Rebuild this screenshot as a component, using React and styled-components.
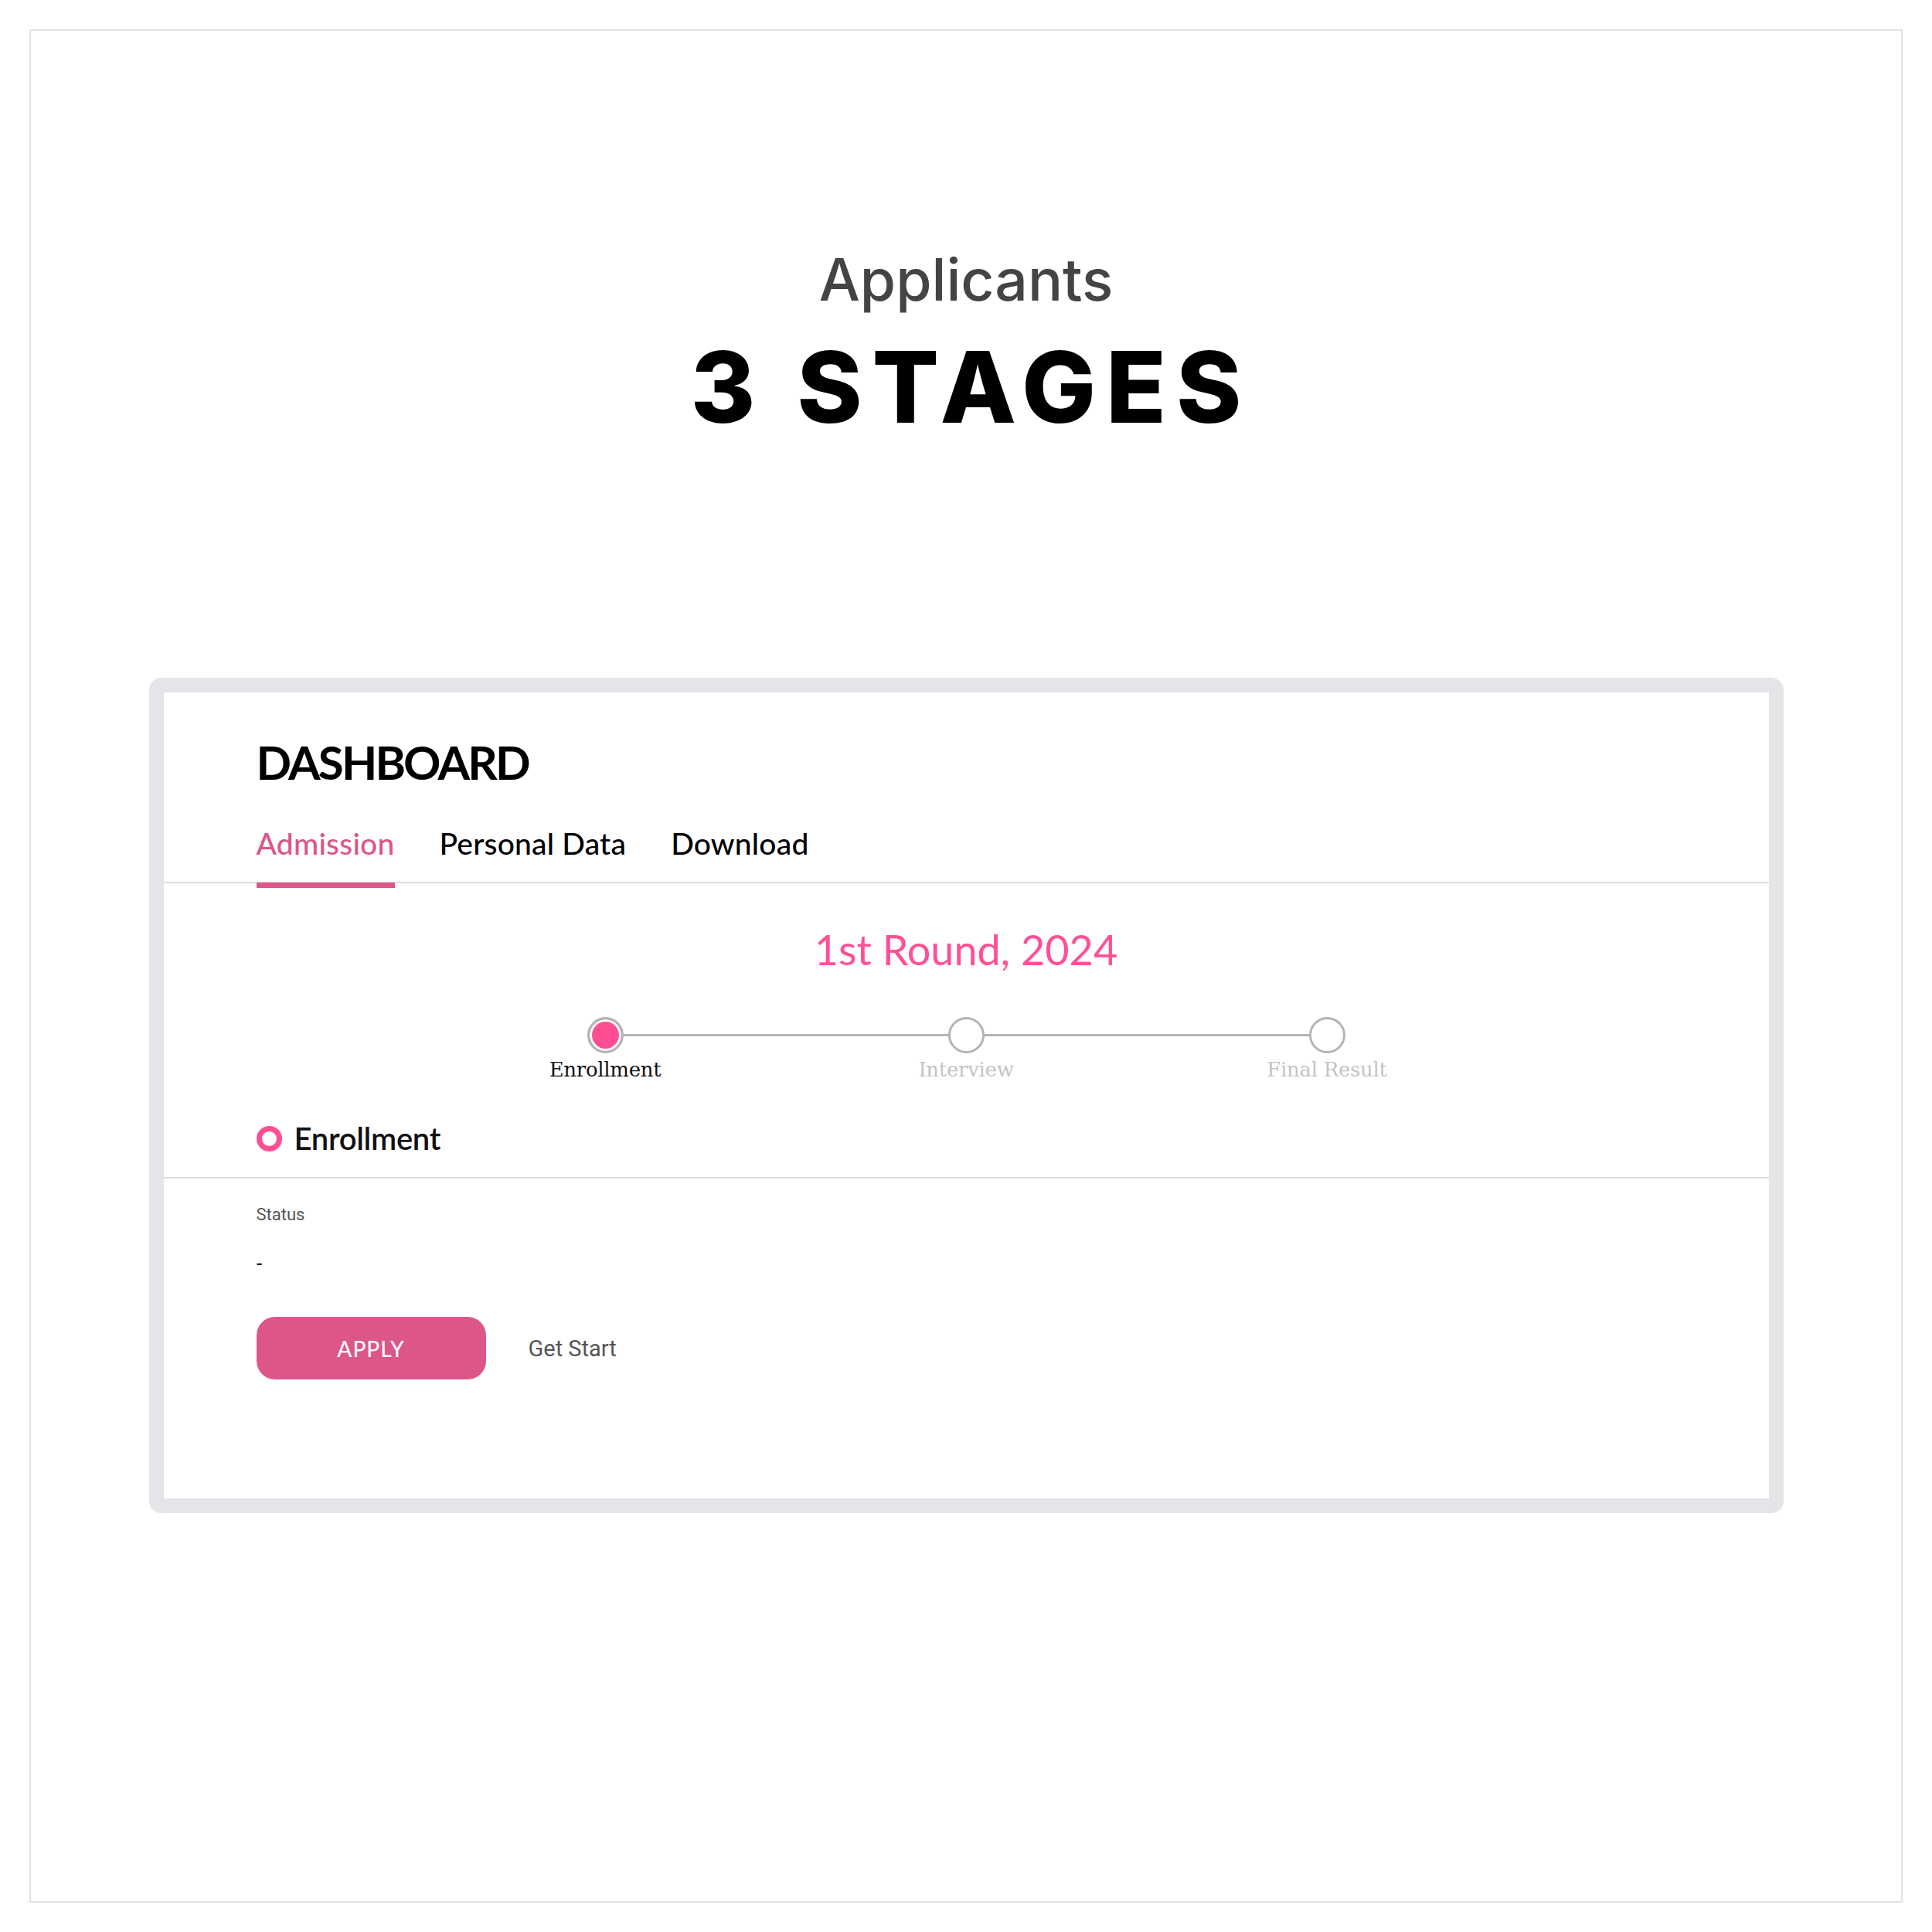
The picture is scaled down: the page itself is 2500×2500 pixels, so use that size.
import styled, { createGlobalStyle, css } from 'styled-components';

const GlobalStyle = createGlobalStyle`
  html, body {
    margin: 0;
    padding: 0;
    background: #fff;
  }
  * {
    box-sizing: border-box;
  }
`;

const steps = [
  { label: 'Enrollment', active: true },
  { label: 'Interview', active: false },
  { label: 'Final Result', active: false },
];

const tabs = ['Admission', 'Personal Data', 'Download'];

function App() {
  return (
    <Page>
      <GlobalStyle />
      <Frame>
        <Kicker>Applicants</Kicker>
        <Headline>3 STAGES</Headline>

        <Card>
          <Title>DASHBOARD</Title>
          <TabBar>
            {tabs.map((t, i) => (
              <Tab key={t} $active={i === 0}>{t}</Tab>
            ))}
          </TabBar>

          <RoundTitle>1st Round, 2024</RoundTitle>

          <Stepper>
            {steps.map((s) => (
              <Step key={s.label}>
                <Dot $active={s.active} />
                <StepLabel $active={s.active}>{s.label}</StepLabel>
              </Step>
            ))}
          </Stepper>

          <SectionHead>
            <Ring />
            <SectionName>Enrollment</SectionName>
          </SectionHead>

          <Body>
            <FieldLabel>Status</FieldLabel>
            <FieldValue>-</FieldValue>
            <Actions>
              <ApplyButton>APPLY</ApplyButton>
              <Hint>Get Start</Hint>
            </Actions>
          </Body>
        </Card>
      </Frame>
    </Page>
  );
}

const Page = styled.div`
  width: 2500px;
  height: 2500px;
  padding: 38px;
  background: #fff;
`;

const Frame = styled.div`
  height: 100%;
  border: 2px solid #e2e2e2;
  display: flex;
  flex-direction: column;
  align-items: center;
  padding-top: 284px;
`;

const Kicker = styled.div`
  font-family: Inter, "Noto Sans", sans-serif;
  font-size: 75px;
  font-weight: 500;
  line-height: 1;
  color: #444;
`;

const Headline = styled.div`
  margin-top: 38px;
  font-family: Inter, "Noto Sans", sans-serif;
  font-size: 128px;
  font-weight: 800;
  line-height: 1;
  letter-spacing: 0.1em;
  padding-left: 0.1em;
  color: #000;
`;

const Card = styled.div`
  margin-top: 312px;
  width: 2115px;
  border: 19px solid #e4e4e9;
  border-radius: 16px;
  background: #fff;
`;

const Title = styled.div`
  margin: 60px 120px 0;
  font-family: Lato, sans-serif;
  font-size: 60px;
  font-weight: 700;
  line-height: 1;
  letter-spacing: -2.8px;
  color: #000;
`;

const TabBar = styled.div`
  margin-top: 56px;
  padding: 0 120px;
  display: flex;
  gap: 58px;
  border-bottom: 2px solid #dcdcdc;
`;

const Tab = styled.div`
  position: relative;
  padding-bottom: 30px;
  font-family: Lato, sans-serif;
  font-size: 39px;
  font-weight: 500;
  line-height: 1;
  letter-spacing: 0.2px;
  color: ${(p) => (p.$active ? '#dc5689' : '#000')};
  ${(p) =>
    p.$active &&
    css`
      &::after {
        content: '';
        position: absolute;
        left: 0;
        right: 0;
        bottom: -8px;
        height: 7px;
        background: #dc5689;
      }
    `}
`;

const RoundTitle = styled.div`
  margin-top: 59px;
  text-align: center;
  font-family: Lato, sans-serif;
  font-size: 54px;
  font-weight: 400;
  line-height: 1;
  color: #ff4f97;
`;

const Stepper = styled.div`
  margin-top: 60px;
  display: grid;
  grid-template-columns: repeat(3, 467px);
  justify-content: center;
`;

const Step = styled.div`
  position: relative;
  display: flex;
  flex-direction: column;
  align-items: center;

  & + &::before {
    content: '';
    position: absolute;
    top: 22px;
    right: 50%;
    width: 100%;
    height: 3px;
    background: #b4b4b4;
  }
`;

const Dot = styled.div`
  position: relative;
  z-index: 1;
  width: 47px;
  height: 47px;
  border-radius: 50%;
  border: 3px solid #b4b4b4;
  background: ${(p) => (p.$active ? '#ff4d94' : '#fff')};
  box-shadow: ${(p) => (p.$active ? 'inset 0 0 0 3px #fff' : 'none')};
`;

const StepLabel = styled.div`
  margin-top: 8px;
  font-family: "DejaVu Serif", serif;
  font-size: 26px;
  line-height: 1;
  letter-spacing: -0.3px;
  color: ${(p) => (p.$active ? '#111' : '#c4c4c4')};
`;

const SectionHead = styled.div`
  margin-top: 56px;
  padding: 0 120px 30px;
  display: flex;
  align-items: center;
  gap: 16px;
  border-bottom: 2px solid #dcdcdc;
`;

const Ring = styled.span`
  width: 33px;
  height: 33px;
  border-radius: 50%;
  border: 7px solid #ff4d94;
`;

const SectionName = styled.div`
  font-family: Lato, sans-serif;
  font-size: 40px;
  font-weight: 600;
  line-height: 1;
  letter-spacing: -0.3px;
  color: #111;
`;

const Body = styled.div`
  padding: 36px 120px 154px;
`;

const FieldLabel = styled.div`
  font-family: Roboto, sans-serif;
  font-size: 22px;
  line-height: 1;
  color: #555;
`;

const FieldValue = styled.div`
  margin-top: 40px;
  font-family: Roboto, sans-serif;
  font-size: 24px;
  font-weight: 500;
  line-height: 1;
  color: #222;
`;

const Actions = styled.div`
  margin-top: 57px;
  display: flex;
  align-items: center;
  gap: 55px;
`;

const ApplyButton = styled.button`
  width: 297px;
  height: 81px;
  border: none;
  border-radius: 24px;
  background: #dc5689;
  color: #fff;
  font-family: Lato, sans-serif;
  font-size: 28px;
  font-weight: 500;
  letter-spacing: 1px;
`;

const Hint = styled.span`
  font-family: Roboto, sans-serif;
  font-size: 29px;
  color: #555;
`;

export default App;
